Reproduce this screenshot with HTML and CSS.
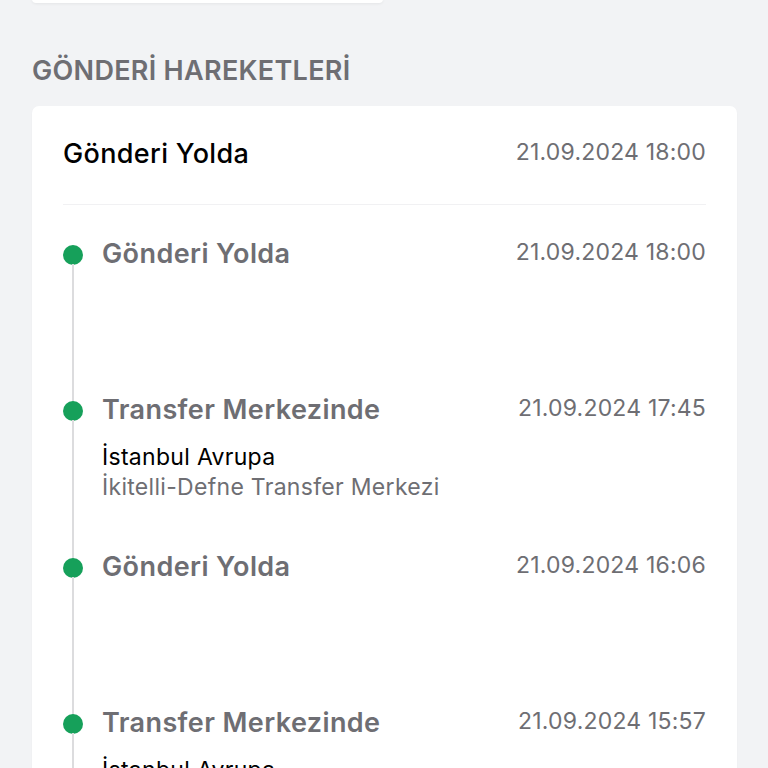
FILE: index.html
```html
<!DOCTYPE html>
<html lang="tr">
<head>
    <meta charset="UTF-8">
    <meta name="viewport" content="width=device-width, initial-scale=1.0">
    <title>Gönderi Hareketleri</title>
    <link rel="stylesheet" href="styles.css">
</head>
<body>
    <div class="top-card"></div>

    <h2 class="section-title">GÖNDERİ HAREKETLERİ</h2>

    <div class="card">
        <div class="card-header">
            <span class="status">Gönderi Yolda</span>
            <span class="date">21.09.2024 18:00</span>
        </div>

        <ul class="timeline">
            <li class="step">
                <div class="step-row">
                    <span class="step-title">Gönderi Yolda</span>
                    <span class="date">21.09.2024 18:00</span>
                </div>
            </li>
            <li class="step">
                <div class="step-row">
                    <span class="step-title">Transfer Merkezinde</span>
                    <span class="date">21.09.2024 17:45</span>
                </div>
                <p class="place">İstanbul Avrupa</p>
                <p class="branch">İkitelli-Defne Transfer Merkezi</p>
            </li>
            <li class="step">
                <div class="step-row">
                    <span class="step-title">Gönderi Yolda</span>
                    <span class="date">21.09.2024 16:06</span>
                </div>
            </li>
            <li class="step">
                <div class="step-row">
                    <span class="step-title">Transfer Merkezinde</span>
                    <span class="date">21.09.2024 15:57</span>
                </div>
                <p class="place">İstanbul Avrupa</p>
                <p class="branch">İkitelli-Defne Transfer Merkezi</p>
            </li>
        </ul>
    </div>
</body>
</html>
```

FILE: styles.css
```css
body {
    margin: 0;
    padding: 0 31px 0 32px;
    background-color: #f2f3f5;
    font-family: Inter, "Noto Sans", sans-serif;
    height: 768px;
    overflow: hidden;
}
.top-card {
    width: 351px;
    height: 4px;
    margin-top: -1px;
    background-color: #fff;
    border-radius: 0 0 8px 8px;
    box-shadow: 0 1px 3px rgba(0, 0, 0, 0.06);
}
.section-title {
    margin: 52px 0 19px 0;
    font-size: 27px;
    font-weight: 600;
    letter-spacing: 0.3px;
    color: #6e6e73;
    line-height: 32px;
}
.card {
    background-color: #fff;
    border-radius: 7px;
    padding: 0 31px;
    box-shadow: 0 1px 2px rgba(0, 0, 0, 0.03);
}
.card-header {
    display: flex;
    justify-content: space-between;
    align-items: flex-start;
    padding: 31px 0 33px 0;
    border-bottom: 1px solid #f1f1f3;
    line-height: 34px;
}
.status {
    font-size: 27px;
    font-weight: 500;
    letter-spacing: 0.35px;
    color: #000;
}
.date {
    font-size: 23px;
    letter-spacing: 0.2px;
    line-height: 31px;
    color: #6e6e73;
}
.timeline {
    list-style: none;
    margin: 0;
    padding: 0;
}
.step {
    position: relative;
    min-height: 156.3px;
    padding-left: 39px;
}
.step::before {
    content: "";
    position: absolute;
    left: 0;
    top: 40px;
    width: 20px;
    height: 20px;
    border-radius: 50%;
    background-color: #16a05a;
}
.step::after {
    content: "";
    position: absolute;
    left: 9px;
    top: 59px;
    width: 2px;
    bottom: -41px;
    background-color: #dcdcde;
}
.step-row {
    display: flex;
    justify-content: space-between;
    align-items: flex-start;
    padding-top: 32px;
    line-height: 34px;
}
.step-title {
    font-size: 27px;
    font-weight: 600;
    letter-spacing: 0.4px;
    color: #6e6e73;
}
.place {
    margin: 15px 0 0 0;
    font-size: 23px;
    letter-spacing: 0.3px;
    color: #000;
    line-height: 30px;
}
.branch {
    margin: 0;
    font-size: 23px;
    letter-spacing: 0.3px;
    color: #6e6e73;
    line-height: 30px;
}
```
